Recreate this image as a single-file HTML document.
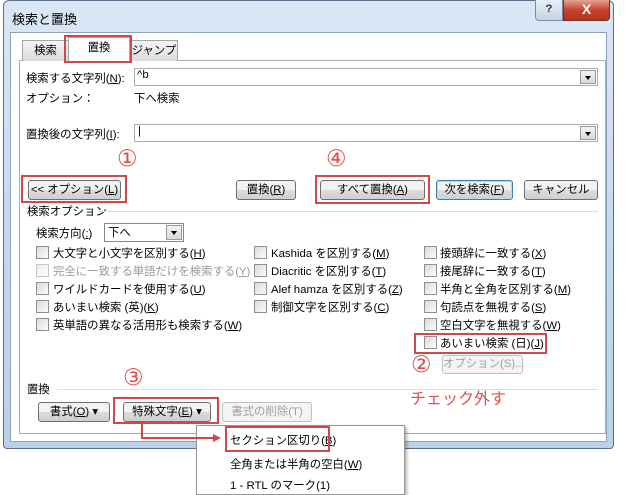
<!DOCTYPE html>
<html><head><meta charset="utf-8"><style>
*{margin:0;padding:0;box-sizing:border-box}
body{width:629px;height:483px;background:#fff;position:relative;overflow:hidden;font-family:"Liberation Sans","Noto Sans CJK JP",sans-serif;font-size:11.4px;color:#000}
.a{position:absolute;white-space:nowrap}
.win{left:3px;top:0;width:611px;height:449px;background:linear-gradient(#dbe7f5,#c3d6ec 60%,#bcd0e8);border:1px solid #5a6e8a;border-radius:6px 6px 4px 4px}
.inner{left:10px;top:32px;width:597px;height:410px;background:#fff;border:1px solid #8ea2bd}
.panel{left:19px;top:60px;width:587px;height:374px;border:1px solid #aab;background:#fff}
.tab{top:40px;height:21px;border:1px solid #9aa;border-bottom:none;background:linear-gradient(#f4f4f4,#dcdcdc);text-align:center;line-height:20px}
.inp{height:18px;border:1px solid #abadb3;background:#fff}
.dd{position:absolute;right:1px;top:1px;width:16px;height:14px;background:linear-gradient(#f3f3f3,#d9d9d9);border:1px solid #999}
.dd:after{content:"";position:absolute;left:4px;top:5px;border:3.5px solid transparent;border-top:4px solid #000}
.btn{height:20px;border:1px solid #707070;border-radius:3px;background:linear-gradient(#f2f2f2 50%,#dddddd 50%,#cfcfcf);text-align:center;line-height:18px}
.dis{color:#a0a0a0;border-color:#c0c0c0;background:#f4f4f4}
.red{position:absolute;border:2px solid #d04848}
.cb{width:13px;height:13px;border:1px solid #8e8f8f;background:linear-gradient(135deg,#dcdcdc,#fbfbfb)}
.num{color:#e05050;font-size:23px;font-family:"DejaVu Sans","Noto Sans CJK JP",sans-serif}
.line{height:1px;background:#d5dfe5}
</style></head><body>
<div class="a win"></div>
<div class="a" style="left:12px;top:9px;font-size:13px">検索と置換</div>
<div class="a" style="left:535px;top:0;width:28px;height:21px;border:1px solid #7a8ba3;border-top:none;border-radius:0 0 0 4px;background:linear-gradient(#e8eef6,#c6d3e3);text-align:center;color:#333;font-weight:bold;line-height:19px">?</div>
<div class="a" style="left:563px;top:0;width:47px;height:21px;border:1px solid #7a2a20;border-top:none;border-radius:0 0 4px 0;background:linear-gradient(#e8a393,#c7432b 50%,#b5331c);text-align:center;color:#fff;font-weight:bold;font-size:14px;line-height:19px">X</div>
<div class="a inner"></div>
<div class="a panel"></div>
<div class="a tab" style="left:22px;width:47px">検索</div>
<div class="a tab" style="left:68px;width:62px;top:37px;height:25px;background:#fff;border-color:#9aa">置換</div>
<div class="a tab" style="left:130px;width:48px">ジャンプ</div>
<div class="red" style="left:64px;top:35px;width:68px;height:28px"></div>

<div class="a" style="left:26px;top:70px">検索する文字列(<u>N</u>):</div>
<div class="a inp" style="left:134px;top:68px;width:464px"><span style="padding-left:2px">^b</span><div class="dd"></div></div>
<div class="a" style="left:26px;top:90px">オプション：</div>
<div class="a" style="left:134px;top:90px">下へ検索</div>
<div class="a" style="left:26px;top:126px">置換後の文字列(<u>I</u>):</div>
<div class="a inp" style="left:134px;top:124px;width:464px"><span style="padding-left:3px">|</span><div class="dd"></div></div>

<div class="a num" style="left:117px;top:146px">①</div>
<div class="a num" style="left:326px;top:146px">④</div>
<div class="a btn" style="left:28px;top:180px;width:93px">&lt;&lt; オプション(<u>L</u>)</div>
<div class="red" style="left:21px;top:175px;width:106px;height:28px"></div>
<div class="a btn" style="left:236px;top:180px;width:60px">置換(<u>R</u>)</div>
<div class="a btn" style="left:320px;top:180px;width:105px">すべて置換(<u>A</u>)</div>
<div class="red" style="left:315px;top:175px;width:115px;height:29px"></div>
<div class="a btn" style="left:436px;top:180px;width:77px;border-color:#3c7fb1;box-shadow:inset 0 0 0 1px #a8dcf8">次を検索(<u>F</u>)</div>
<div class="a btn" style="left:524px;top:180px;width:74px">キャンセル</div>

<div class="a" style="left:27px;top:203px">検索オプション</div>
<div class="a line" style="left:99px;top:211px;width:499px"></div>
<div class="a" style="left:36px;top:225px">検索方向(<u>:</u>)</div>
<div class="a inp" style="left:104px;top:223px;width:80px;height:19px;border-color:#888"><span style="padding-left:3px">下へ</span><div class="dd" style="height:15px"></div></div>

<div class="a cb" style="left:36px;top:246px"></div><div class="a" style="left:53px;top:245px">大文字と小文字を区別する(<u>H</u>)</div>
<div class="a cb" style="left:36px;top:264px;opacity:.5"></div><div class="a" style="left:53px;top:263px;color:#999">完全に一致する単語だけを検索する(<u>Y</u>)</div>
<div class="a cb" style="left:36px;top:282px"></div><div class="a" style="left:53px;top:281px">ワイルドカードを使用する(<u>U</u>)</div>
<div class="a cb" style="left:36px;top:300px"></div><div class="a" style="left:53px;top:299px">あいまい検索 (英)(<u>K</u>)</div>
<div class="a cb" style="left:36px;top:318px"></div><div class="a" style="left:53px;top:317px">英単語の異なる活用形も検索する(<u>W</u>)</div>

<div class="a cb" style="left:254px;top:246px"></div><div class="a" style="left:271px;top:245px">Kashida を区別する(<u>M</u>)</div>
<div class="a cb" style="left:254px;top:264px"></div><div class="a" style="left:271px;top:263px">Diacritic を区別する(<u>T</u>)</div>
<div class="a cb" style="left:254px;top:282px"></div><div class="a" style="left:271px;top:281px">Alef hamza を区別する(<u>Z</u>)</div>
<div class="a cb" style="left:254px;top:300px"></div><div class="a" style="left:271px;top:299px">制御文字を区別する(<u>C</u>)</div>

<div class="a cb" style="left:424px;top:246px"></div><div class="a" style="left:440px;top:245px">接頭辞に一致する(<u>X</u>)</div>
<div class="a cb" style="left:424px;top:264px"></div><div class="a" style="left:440px;top:263px">接尾辞に一致する(<u>T</u>)</div>
<div class="a cb" style="left:424px;top:282px"></div><div class="a" style="left:440px;top:281px">半角と全角を区別する(<u>M</u>)</div>
<div class="a cb" style="left:424px;top:300px"></div><div class="a" style="left:440px;top:299px">句読点を無視する(<u>S</u>)</div>
<div class="a cb" style="left:424px;top:318px"></div><div class="a" style="left:440px;top:317px">空白文字を無視する(<u>W</u>)</div>
<div class="a cb" style="left:424px;top:336px"></div><div class="a" style="left:440px;top:335px">あいまい検索 (日)(<u>J</u>)</div>
<div class="red" style="left:414px;top:333px;width:133px;height:21px"></div>
<div class="a num" style="left:411px;top:352px">②</div>
<div class="a btn dis" style="left:442px;top:355px;width:81px;height:19px;line-height:17px">オプション(S)...</div>
<div class="a" style="left:410px;top:385px;color:#e05050;font-size:16px">チェック外す</div>

<div class="a" style="left:27px;top:381px">置換</div>
<div class="a line" style="left:57px;top:389px;width:541px"></div>
<div class="a num" style="left:123px;top:365px">③</div>
<div class="a btn" style="left:38px;top:402px;width:72px">書式(<u>O</u>) ▾</div>
<div class="a btn" style="left:123px;top:402px;width:88px">特殊文字(<u>E</u>) ▾</div>
<div class="red" style="left:113px;top:397px;width:106px;height:27px"></div>
<div class="a btn dis" style="left:222px;top:402px;width:90px">書式の削除(T)</div>

<div class="a" style="left:196px;top:425px;width:209px;height:70px;background:#fff;border:1px solid #979797;box-shadow:2px 2px 3px rgba(0,0,0,.3)"></div>
<div class="a" style="left:230px;top:432px">セクション区切り(<u>B</u>)</div>
<div class="red" style="left:225px;top:426px;width:105px;height:26px"></div>
<div class="a" style="left:230px;top:456px">全角または半角の空白(<u>W</u>)</div>
<div class="a" style="left:230px;top:477px">1 - RTL のマーク(1)</div>
<svg class="a" style="left:0;top:0" width="629" height="483"><path d="M142 424V438H214" fill="none" stroke="#d04848" stroke-width="2"/><path d="M221 438l-8-4v8z" fill="#d04848"/></svg>
</body></html>
